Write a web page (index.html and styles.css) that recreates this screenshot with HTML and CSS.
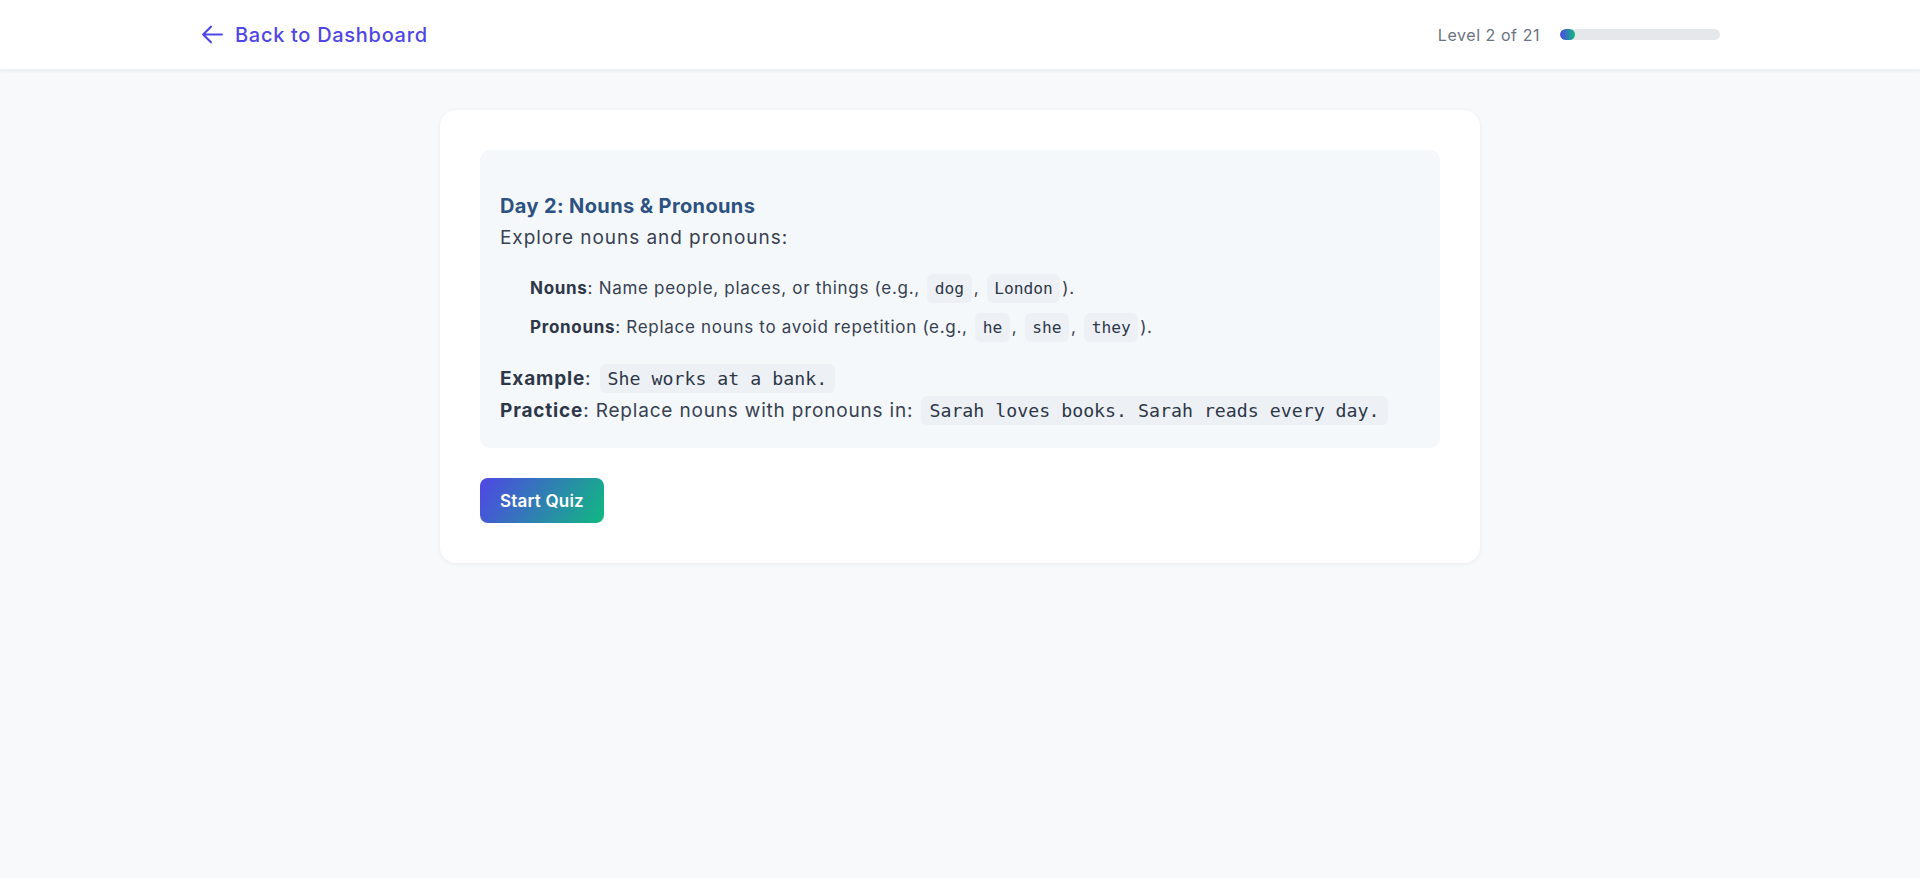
FILE: index.html
```html
<!DOCTYPE html>
<html lang="en">
<head>
<meta charset="utf-8">
<title>Day 2: Nouns &amp; Pronouns</title>
<link rel="stylesheet" href="styles.css">
</head>
<body>
<header class="topbar">
  <div class="topbar-inner">
    <a class="back-link" href="#">
      <svg class="back-icon" viewBox="0 0 24 24" fill="none" stroke="currentColor" stroke-width="2" stroke-linecap="round" stroke-linejoin="round"><path d="M10.5 19.5 3 12m0 0 7.5-7.5M3 12h18"/></svg>
      <span>Back to Dashboard</span>
    </a>
    <div class="level">
      <span class="level-text">Level 2 of 21</span>
      <div class="progress"><div class="progress-fill" style="width:9.52%"></div></div>
    </div>
  </div>
</header>
<main class="page">
  <section class="card">
    <div class="lesson">
      <h3 class="lesson-title">Day 2: Nouns &amp; Pronouns</h3>
      <p class="lesson-intro">Explore nouns and pronouns:</p>
      <ul class="lesson-list">
        <li><strong>Nouns</strong>: Name people, places, or things (e.g., <code>dog</code>, <code>London</code>).</li>
        <li><strong>Pronouns</strong>: Replace nouns to avoid repetition (e.g., <code>he</code>, <code>she</code>, <code>they</code>).</li>
      </ul>
      <p class="lesson-line"><strong>Example</strong>: <code>She works at a bank.</code></p>
      <p class="lesson-line"><strong>Practice</strong>: Replace nouns with pronouns in: <code>Sarah loves books. Sarah reads every day.</code></p>
    </div>
    <button class="start-btn" type="button">Start Quiz</button>
  </section>
</main>
</body>
</html>
```
FILE: styles.css
```css
* { box-sizing: border-box; }
html, body { margin: 0; padding: 0; }
body {
  background: #f8f9fb;
  font-family: Inter, "Open Sans", "Noto Sans", sans-serif;
  color: #374151;
  min-height: 878px;
}
.topbar {
  background: #ffffff;
  height: 70px;
  box-shadow: 0 1px 3px rgba(17, 24, 39, 0.07);
  border-bottom: 1px solid #eef0f3;
}
.topbar-inner {
  height: 100%;
  padding: 0 200px;
  display: flex;
  align-items: center;
  justify-content: space-between;
}
.back-link {
  display: flex;
  align-items: center;
  gap: 10px;
  color: #4f46e5;
  text-decoration: none;
  font-size: 20px;
  font-weight: 500;
  letter-spacing: 0.7px;
}
.back-icon { width: 25px; height: 25px; display: block; }
.level {
  display: flex;
  align-items: center;
  gap: 20px;
}
.level-text {
  font-size: 16px;
  color: #6b7280;
  letter-spacing: 0.55px;
}
.progress {
  width: 160px;
  height: 11px;
  background: #e5e7eb;
  border-radius: 999px;
  overflow: hidden;
}
.progress-fill {
  height: 100%;
  border-radius: 999px;
  background: linear-gradient(90deg, #4f46e5, #10b981);
}
.page {
  padding-top: 40px;
  display: flex;
  justify-content: center;
}
.card {
  width: 1040px;
  background: #ffffff;
  border-radius: 16px;
  padding: 40px;
  box-shadow: 0 1px 4px rgba(17, 24, 39, 0.06);
}
.lesson {
  background: #f5f8fb;
  border-radius: 10px;
  padding: 20px 20px 21px;
}
.lesson-title {
  margin: 21px 0 0;
  font-size: 20px;
  line-height: 30px;
  font-weight: 700;
  color: #2c5282;
  letter-spacing: 0.37px;
}
.lesson-intro {
  margin: 3px 0 0;
  font-size: 19px;
  line-height: 28px;
  letter-spacing: 0.95px;
}
.lesson-list {
  list-style: none;
  margin: 22px 0 0;
  padding: 0 0 0 30px;
}
.lesson-list li {
  font-size: 17px;
  line-height: 28px;
  margin-bottom: 11px;
  letter-spacing: 0.7px;
}
.lesson-list li:last-child { margin-bottom: 0; }
.lesson-line {
  margin: 0;
  font-size: 19px;
  line-height: 32px;
  letter-spacing: 0.82px;
}
.lesson-list + .lesson-line { margin-top: 22px; }
strong { font-weight: 700; color: #2d3748; }
code {
  font-family: "DejaVu Sans Mono", "Liberation Mono", monospace;
  font-size: 0.96em;
  line-height: 1;
  letter-spacing: 0;
  background: #edf1f5;
  color: #2d3748;
  border-radius: 6px;
  padding: 4.4px 8px;
  margin: 0 2px;
}
.lesson-list code { padding: 5px 7.5px; font-size: 0.955em; }
.start-btn {
  margin-top: 30px;
  height: 45px;
  padding: 0 20px;
  border: none;
  border-radius: 8px;
  background: linear-gradient(120deg, #4f46e5, #10b981);
  color: #ffffff;
  font-family: inherit;
  font-size: 17px;
  font-weight: 600;
  letter-spacing: 0.2px;
  cursor: pointer;
  display: block;
}
```
